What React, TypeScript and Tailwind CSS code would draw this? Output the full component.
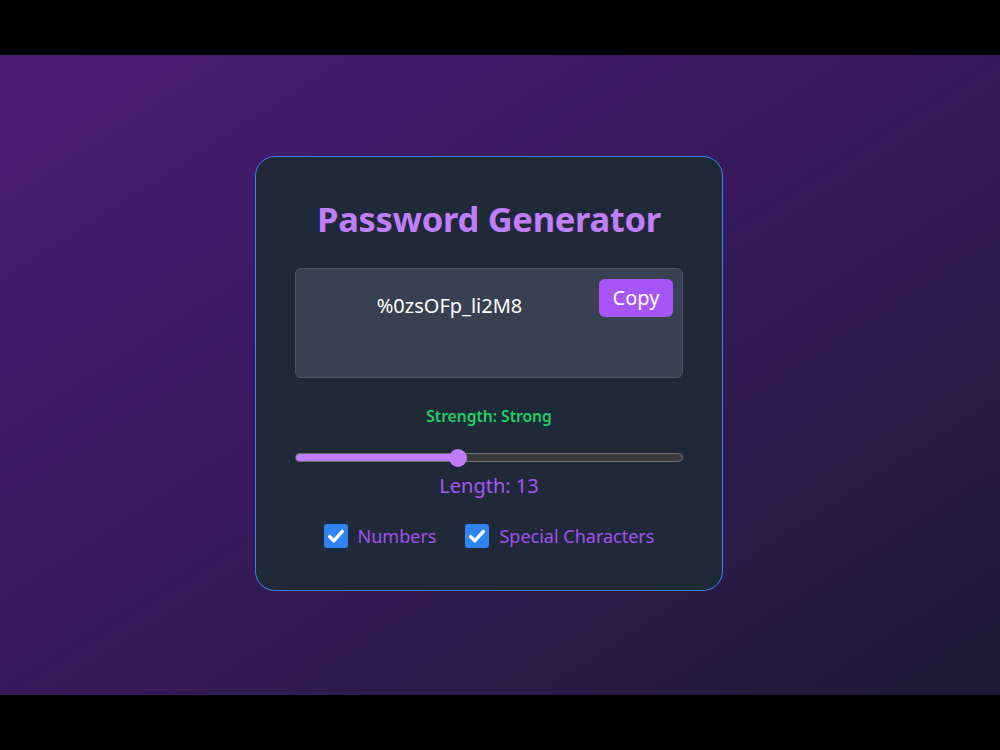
import { useState } from "react";

const sans = { fontFamily: '"Noto Sans", "Open Sans", sans-serif' };

type OptionProps = {
  label: string;
  checked: boolean;
  onToggle: () => void;
};

const Option: React.FC<OptionProps> = ({ label, checked, onToggle }) => {
  return (
    <label className="flex items-center gap-[10px] cursor-pointer select-none" onClick={onToggle}>
      <span
        className={`w-6 h-6 rounded-[3px] flex items-center justify-center ${
          checked ? "bg-[#3083f6]" : "bg-white border border-gray-400"
        }`}
      >
        {checked && (
          <svg width="20" height="20" viewBox="0 0 20 20" fill="none">
            <path d="M3.6 10.6l4.2 4.2L16.4 5.4" stroke="white" strokeWidth="3.4" strokeLinecap="round" strokeLinejoin="round" />
          </svg>
        )}
      </span>
      <span className="text-[18px] text-[#a251f0]">{label}</span>
    </label>
  );
};

export default function App() {
  const [numbers, setNumbers] = useState(true);
  const [special, setSpecial] = useState(true);
  const length = 13;
  const fill = 42; // percent of the track up to the thumb

  return (
    <div className="w-[1000px] h-[750px] bg-black flex flex-col justify-center" style={sans}>
      <div className="h-[640px] bg-linear-to-br from-[#4c1d78] via-[#36195a] to-[#1e1a36] flex items-center pl-[255px] pb-[4px]">
        <div className="w-[468px] bg-[#1f2937] border border-[#3b82f6] rounded-[20px] px-[39px] pt-[42px] pb-[40px] flex flex-col">
          <h1 className="text-[34.5px] leading-[40px] font-bold text-[#c17efc] text-center tracking-[-0.3px]">
            Password Generator
          </h1>

          <div className="mt-[29px] h-[110px] bg-[#374151] border border-[#4b5563] rounded-md pl-[10px] pr-[9px] py-[10px] flex items-start gap-[6px]">
            <div className="flex-1 text-center text-white text-[20px] leading-[28px] pt-[13px]">%0zsOFp_li2M8</div>
            <button className="w-[74px] h-[38px] bg-[#a855f7] text-white text-[20px] rounded-md">Copy</button>
          </div>

          <div className="mt-[27px] text-center text-[15.6px] font-semibold text-[#20d064] leading-[22px]">
            Strength: Strong
          </div>

          <div className="mt-[22px] relative h-[18px] flex items-center">
            <div className="w-full h-[9px] rounded-full bg-[#3a3a3a] border border-[#707070] overflow-hidden">
              <div className="h-full bg-[#c27cfb]" style={{ width: `${fill}%` }} />
            </div>
            <div
              className="absolute top-0 w-[18px] h-[18px] rounded-full bg-[#c27cfb] -translate-x-1/2"
              style={{ left: `${fill}%` }}
            />
          </div>

          <div className="mt-[5px] text-center text-[20px] leading-[28px] text-[#a855f7]">Length: {length}</div>

          <div className="mt-[23px] flex justify-center gap-[29px]">
            <Option label="Numbers" checked={numbers} onToggle={() => setNumbers(!numbers)} />
            <Option label="Special Characters" checked={special} onToggle={() => setSpecial(!special)} />
          </div>
        </div>
      </div>
    </div>
  );
}
